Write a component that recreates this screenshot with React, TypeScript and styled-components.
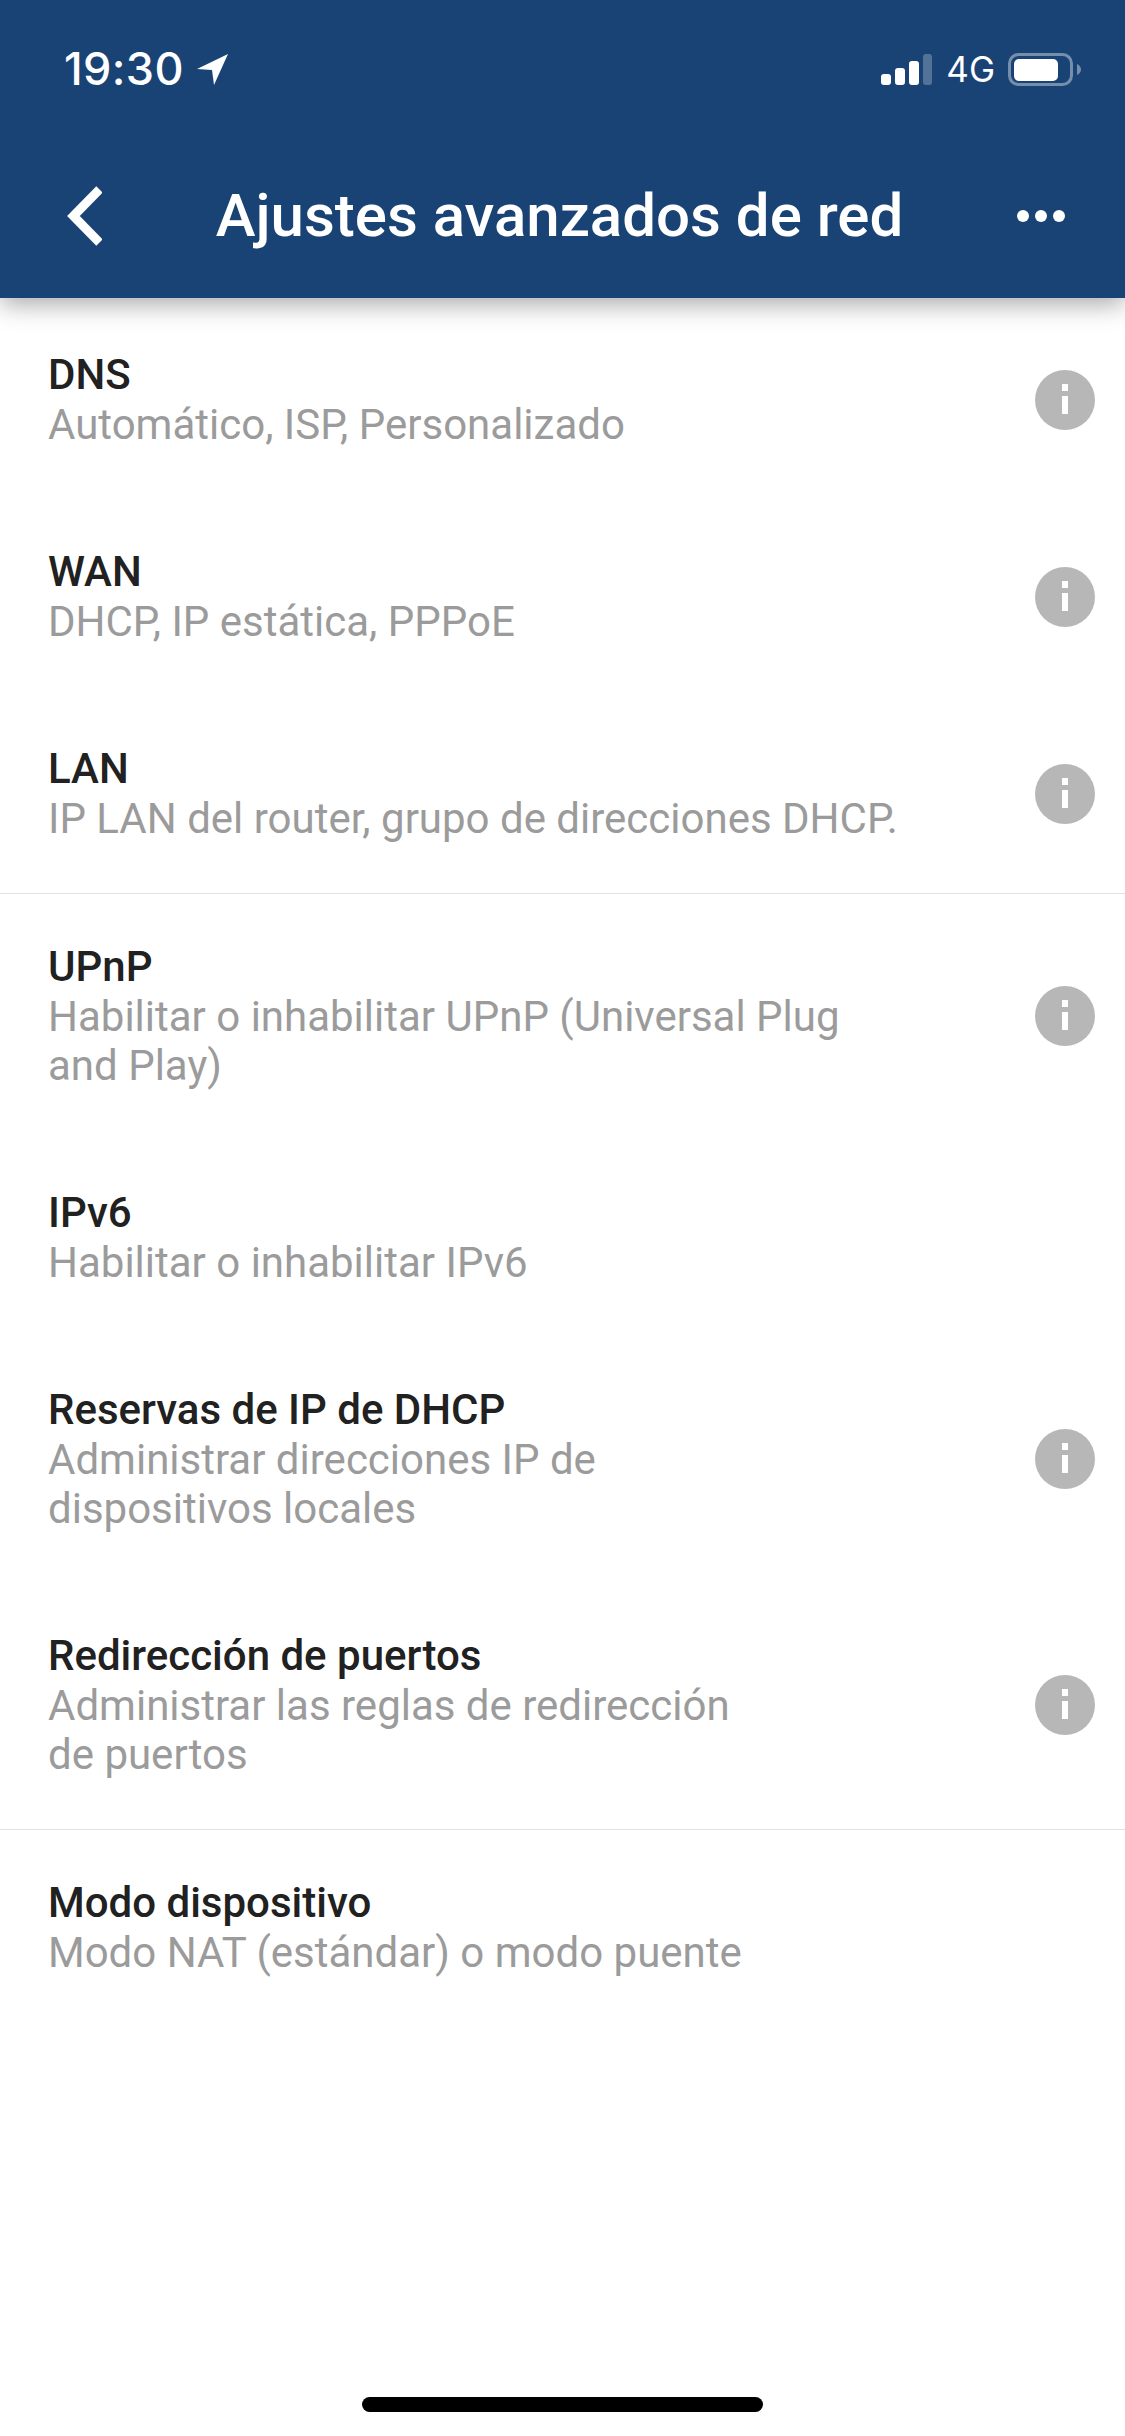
import React from "react";
import styled, { createGlobalStyle } from "styled-components";

const Global = createGlobalStyle`
  html, body { margin: 0; padding: 0; background: #fff; }
  body { font-family: Roboto, "Liberation Sans", sans-serif; }
`;

const Page = styled.div`
  width: 1125px;
  height: 2436px;
  display: flex;
  flex-direction: column;
  background: #fff;
  overflow: hidden;
`;

const Header = styled.header`
  height: 298px;
  flex: none;
  box-sizing: border-box;
  background: #1a4375;
  box-shadow: 0 6px 24px rgba(0, 0, 0, 0.35);
  color: #fff;
  position: relative;
  z-index: 1;
  display: flex;
  flex-direction: column;
`;

const StatusBar = styled.div`
  height: 56px;
  margin-top: 41px;
  display: flex;
  align-items: center;
  justify-content: space-between;
  padding: 0 43px 0 64px;
`;

const StatusGroup = styled.div`
  display: flex;
  align-items: center;
  gap: ${(p: { $gap: number }) => p.$gap}px;
`;

const Clock = styled.span`
  font-family: Inter, Roboto, sans-serif;
  font-size: 45px;
  font-weight: 500;
  letter-spacing: 0.4px;
  line-height: 56px;
`;

const Network = styled.span`
  font-family: Inter, Roboto, sans-serif;
  font-size: 35px;
  font-weight: 400;
  line-height: 40px;
`;

const NavBar = styled.div`
  flex: 1;
  display: flex;
  align-items: center;
  justify-content: space-between;
  padding: 37px 60px 0 62px;
`;

const Title = styled.h1`
  margin: 0;
  font-size: 60px;
  font-weight: 500;
  line-height: 70px;
  white-space: nowrap;
`;

const List = styled.main`
  display: flex;
  flex-direction: column;
  flex: 1;
  padding-top: 4px;
`;

const Row = styled.div`
  display: flex;
  align-items: center;
  justify-content: space-between;
  padding: 48px 30px 50px 48px;
`;

const RowText = styled.div`
  display: flex;
  flex-direction: column;
`;

const RowTitle = styled.div`
  font-size: 42px;
  font-weight: 500;
  line-height: 50px;
  color: #212121;
`;

const RowSub = styled.div`
  font-size: 42px;
  font-weight: 400;
  line-height: 49px;
  color: #9b9b9b;
`;

const Divider = styled.hr`
  margin: 0;
  border: 0;
  height: 1px;
  background: #e2e2e2;
`;

const HomeBar = styled.div`
  flex: none;
  width: 401px;
  height: 15px;
  margin: 0 auto 24px;
  border-radius: 8px;
  background: #000;
`;

const InfoIcon = () => (
  <svg width="60" height="60" viewBox="0 0 60 60">
    <circle cx="30" cy="30" r="30" fill="#b7b7b7" />
    <rect x="27" y="14" width="6" height="7" fill="#fff" />
    <rect x="27" y="26" width="6" height="18" fill="#fff" />
  </svg>
);

type Item = { title: string; sub: string[]; info: boolean };

const groups: Item[][] = [
  [
    { title: "DNS", sub: ["Automático, ISP, Personalizado"], info: true },
    { title: "WAN", sub: ["DHCP, IP estática, PPPoE"], info: true },
    { title: "LAN", sub: ["IP LAN del router, grupo de direcciones DHCP."], info: true },
  ],
  [
    { title: "UPnP", sub: ["Habilitar o inhabilitar UPnP (Universal Plug", "and Play)"], info: true },
    { title: "IPv6", sub: ["Habilitar o inhabilitar IPv6"], info: false },
    { title: "Reservas de IP de DHCP", sub: ["Administrar direcciones IP de", "dispositivos locales"], info: true },
    { title: "Redirección de puertos", sub: ["Administrar las reglas de redirección", "de puertos"], info: true },
  ],
  [{ title: "Modo dispositivo", sub: ["Modo NAT (estándar) o modo puente"], info: false }],
];

export default function App() {
  return (
    <Page>
      <Global />
      <Header>
        <StatusBar>
          <StatusGroup $gap={13}>
            <Clock>19:30</Clock>
            <svg width="32" height="32" viewBox="0 0 32 32">
              <path d="M31 1 L0 16 L15 17 L17 32 Z" fill="#fff" />
            </svg>
          </StatusGroup>
          <StatusGroup $gap={13}>
            <svg width="52" height="31" viewBox="0 0 52 31">
              <rect x="0" y="20" width="10" height="11" rx="3" fill="#fff" />
              <rect x="14" y="14" width="10" height="17" rx="3" fill="#fff" />
              <rect x="28" y="7" width="10" height="24" rx="3" fill="#fff" />
              <rect x="42" y="0" width="9" height="31" rx="3" fill="#fff" fillOpacity="0.25" />
            </svg>
            <Network>4G</Network>
            <svg width="74" height="33" viewBox="0 0 74 33">
              <rect x="1.5" y="1.5" width="62" height="30" rx="9" fill="none" stroke="#fff" strokeOpacity="0.4" strokeWidth="3" />
              <rect x="6" y="6" width="44" height="22" rx="5" fill="#fff" />
              <path d="M69 11 C71.5 12 73 14 73 16.5 C73 19 71.5 21 69 22 Z" fill="#fff" fillOpacity="0.4" />
            </svg>
          </StatusGroup>
        </StatusBar>
        <NavBar>
          <svg width="40" height="64" viewBox="0 0 40 64">
            <path d="M37.5 5.5 L11.4 32 L37.5 58.5" fill="none" stroke="#fff" strokeWidth="9" />
          </svg>
          <Title>Ajustes avanzados de red</Title>
          <svg width="48" height="12" viewBox="0 0 48 12">
            <circle cx="6" cy="6" r="6" fill="#fff" />
            <circle cx="24" cy="6" r="6" fill="#fff" />
            <circle cx="42" cy="6" r="6" fill="#fff" />
          </svg>
        </NavBar>
      </Header>
      <List>
        {groups.map((group, g) => (
          <React.Fragment key={g}>
            {g > 0 && <Divider />}
            {group.map((item) => (
              <Row key={item.title}>
                <RowText>
                  <RowTitle>{item.title}</RowTitle>
                  {item.sub.map((line) => (
                    <RowSub key={line}>{line}</RowSub>
                  ))}
                </RowText>
                {item.info && <InfoIcon />}
              </Row>
            ))}
          </React.Fragment>
        ))}
      </List>
      <HomeBar />
    </Page>
  );
}
